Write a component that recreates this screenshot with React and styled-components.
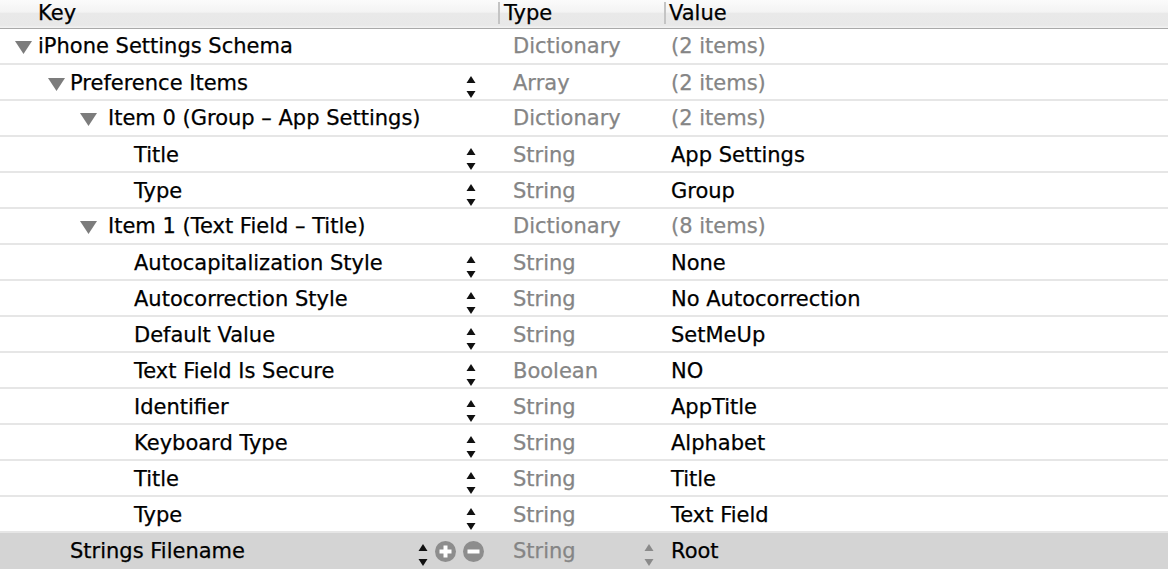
import React from "react";
import styled, { createGlobalStyle } from "styled-components";

const GlobalStyle = createGlobalStyle`
  html, body {
    margin: 0;
    padding: 0;
    background: #ffffff;
  }
  body {
    font-family: "DejaVu Sans", "Liberation Sans", sans-serif;
    -webkit-font-smoothing: antialiased;
  }
`;

const Outline = styled.div`
  width: 1168px;
  height: 584px;
  overflow: hidden;
  background: #ffffff;
  font-size: 21px;
  color: #000;
  -webkit-text-stroke: 0.25px currentColor;
`;

const Header = styled.div`
  display: grid;
  grid-template-columns: 498px 166px 1fr;
  height: 28px;
  background: linear-gradient(
    #fbfbfb 0%,
    #f3f3f3 44%,
    #e9e9e9 46%,
    #e8e8e8 90%,
    #f3f3f3 100%
  );
  border-bottom: 1px solid #a9a9a9;
`;

const HeaderCell = styled.div`
  display: flex;
  align-items: center;
  align-self: start;
  box-sizing: border-box;
  padding-left: ${({ $pad }) => $pad}px;
  margin-top: ${({ $divider }) => ($divider ? "2px" : "0")};
  height: ${({ $divider }) => ($divider ? "22px" : "28px")};
  border-left: ${({ $divider }) => ($divider ? "2px solid #c4c4c4" : "none")};
`;

const HeaderLabel = styled.span`
  position: relative;
  top: ${({ $shift }) => $shift}px;
`;

const Row = styled.div`
  display: grid;
  grid-template-columns: 498px 166px 1fr;
  height: 36px;
  box-sizing: border-box;
  background: ${({ $selected }) => ($selected ? "#d4d4d4" : "#ffffff")};
  border-bottom: 2px solid ${({ $selected }) => ($selected ? "#d4d4d4" : "#e6e6e6")};
`;

const KeyCell = styled.div`
  display: flex;
  align-items: center;
  padding-left: ${({ $indent }) => $indent}px;
  padding-right: ${({ $right }) => $right}px;
  min-width: 0;
`;

const Disclosure = styled.svg`
  flex: none;
  width: 17px;
  height: 13px;
  margin-right: ${({ $gap }) => $gap}px;
  margin-top: 2px;
`;

const KeyLabel = styled.span`
  flex: 1;
  white-space: nowrap;
`;

const TypeCell = styled.div`
  display: flex;
  align-items: center;
  padding-left: 15px;
  padding-right: 10px;
  color: #858585;
`;

const TypeLabel = styled.span`
  flex: 1;
  white-space: nowrap;
`;

const ValueCell = styled.div`
  display: flex;
  align-items: center;
  padding-left: 7px;
  white-space: nowrap;
  color: ${({ $muted }) => ($muted ? "#858585" : "#000")};
`;

const StepperSvg = styled.svg`
  flex: none;
  width: 10px;
  height: 36px;
  align-self: flex-start;
`;

const Controls = styled.div`
  display: flex;
  align-items: center;
  gap: 7px;
`;

const RoundButton = styled.svg`
  flex: none;
  width: 21px;
  height: 21px;
`;

const Blank = styled.div`
  height: 14px;
  background: #ffffff;
`;

const Triangle = ({ gap }) => (
  <Disclosure $gap={gap} viewBox="0 0 17 13">
    <polygon points="0,0 17,0 8.5,13" fill="#7c7c7c" />
  </Disclosure>
);

const Stepper = ({ color = "#111" }) => (
  <StepperSvg viewBox="0 0 10 36">
    <polygon points="5,11 9.5,18 0.5,18" fill={color} />
    <polygon points="0.5,26 9.5,26 5,33" fill={color} />
  </StepperSvg>
);

const PlusButton = () => (
  <RoundButton viewBox="0 0 21 21">
    <circle cx="10.5" cy="10.5" r="10.5" fill="#8d8d8d" />
    <rect x="4.5" y="8.5" width="12" height="4" fill="#ffffff" />
    <rect x="8.5" y="4.5" width="4" height="12" fill="#ffffff" />
  </RoundButton>
);

const MinusButton = () => (
  <RoundButton viewBox="0 0 21 21">
    <circle cx="10.5" cy="10.5" r="10.5" fill="#8d8d8d" />
    <rect x="4.5" y="8.5" width="12" height="4" fill="#ffffff" />
  </RoundButton>
);

// indentation per outline level: where the triangle starts, where the text starts
const levels = [
  { tri: 15, text: 38 },
  { tri: 48, text: 70 },
  { tri: 80, text: 108 },
  { tri: 112, text: 134 },
];

const rows = [
  { level: 0, open: true, key: "iPhone Settings Schema", type: "Dictionary", value: "(2 items)", muted: true },
  { level: 1, open: true, key: "Preference Items", type: "Array", value: "(2 items)", muted: true, stepper: true },
  { level: 2, open: true, key: "Item 0 (Group \u2013 App Settings)", type: "Dictionary", value: "(2 items)", muted: true },
  { level: 3, key: "Title", type: "String", value: "App Settings", stepper: true },
  { level: 3, key: "Type", type: "String", value: "Group", stepper: true },
  { level: 2, open: true, key: "Item 1 (Text Field \u2013 Title)", type: "Dictionary", value: "(8 items)", muted: true },
  { level: 3, key: "Autocapitalization Style", type: "String", value: "None", stepper: true },
  { level: 3, key: "Autocorrection Style", type: "String", value: "No Autocorrection", stepper: true },
  { level: 3, key: "Default Value", type: "String", value: "SetMeUp", stepper: true },
  { level: 3, key: "Text Field Is Secure", type: "Boolean", value: "NO", stepper: true },
  { level: 3, key: "Identifier", type: "String", value: "AppTitle", stepper: true },
  { level: 3, key: "Keyboard Type", type: "String", value: "Alphabet", stepper: true },
  { level: 3, key: "Title", type: "String", value: "Title", stepper: true },
  { level: 3, key: "Type", type: "String", value: "Text Field", stepper: true },
  { level: 1, key: "Strings Filename", type: "String", value: "Root", selected: true },
];

const OutlineRow = ({ row }) => {
  const lvl = levels[row.level];
  const indent = row.open ? lvl.tri : lvl.text;
  return (
    <Row $selected={row.selected}>
      <KeyCell $indent={indent} $right={row.selected ? 14 : 22}>
        {row.open && <Triangle gap={lvl.text - lvl.tri - 17} />}
        <KeyLabel>{row.key}</KeyLabel>
        {row.stepper && <Stepper />}
        {row.selected && (
          <Controls>
            <Stepper />
            <PlusButton />
            <MinusButton />
          </Controls>
        )}
      </KeyCell>
      <TypeCell>
        <TypeLabel>{row.type}</TypeLabel>
        {row.selected && <Stepper color="#8a8a8a" />}
      </TypeCell>
      <ValueCell $muted={row.muted}>{row.value}</ValueCell>
    </Row>
  );
};

const App = () => (
  <>
    <GlobalStyle />
    <Outline>
      <Header>
        <HeaderCell $pad={38}>
          <HeaderLabel $shift={-1}>Key</HeaderLabel>
        </HeaderCell>
        <HeaderCell $pad={4} $divider>
          <HeaderLabel $shift={0}>Type</HeaderLabel>
        </HeaderCell>
        <HeaderCell $pad={3} $divider>
          <HeaderLabel $shift={0}>Value</HeaderLabel>
        </HeaderCell>
      </Header>
      {rows.map((row, i) => (
        <OutlineRow key={i} row={row} />
      ))}
      <Blank />
    </Outline>
  </>
);

export default App;
